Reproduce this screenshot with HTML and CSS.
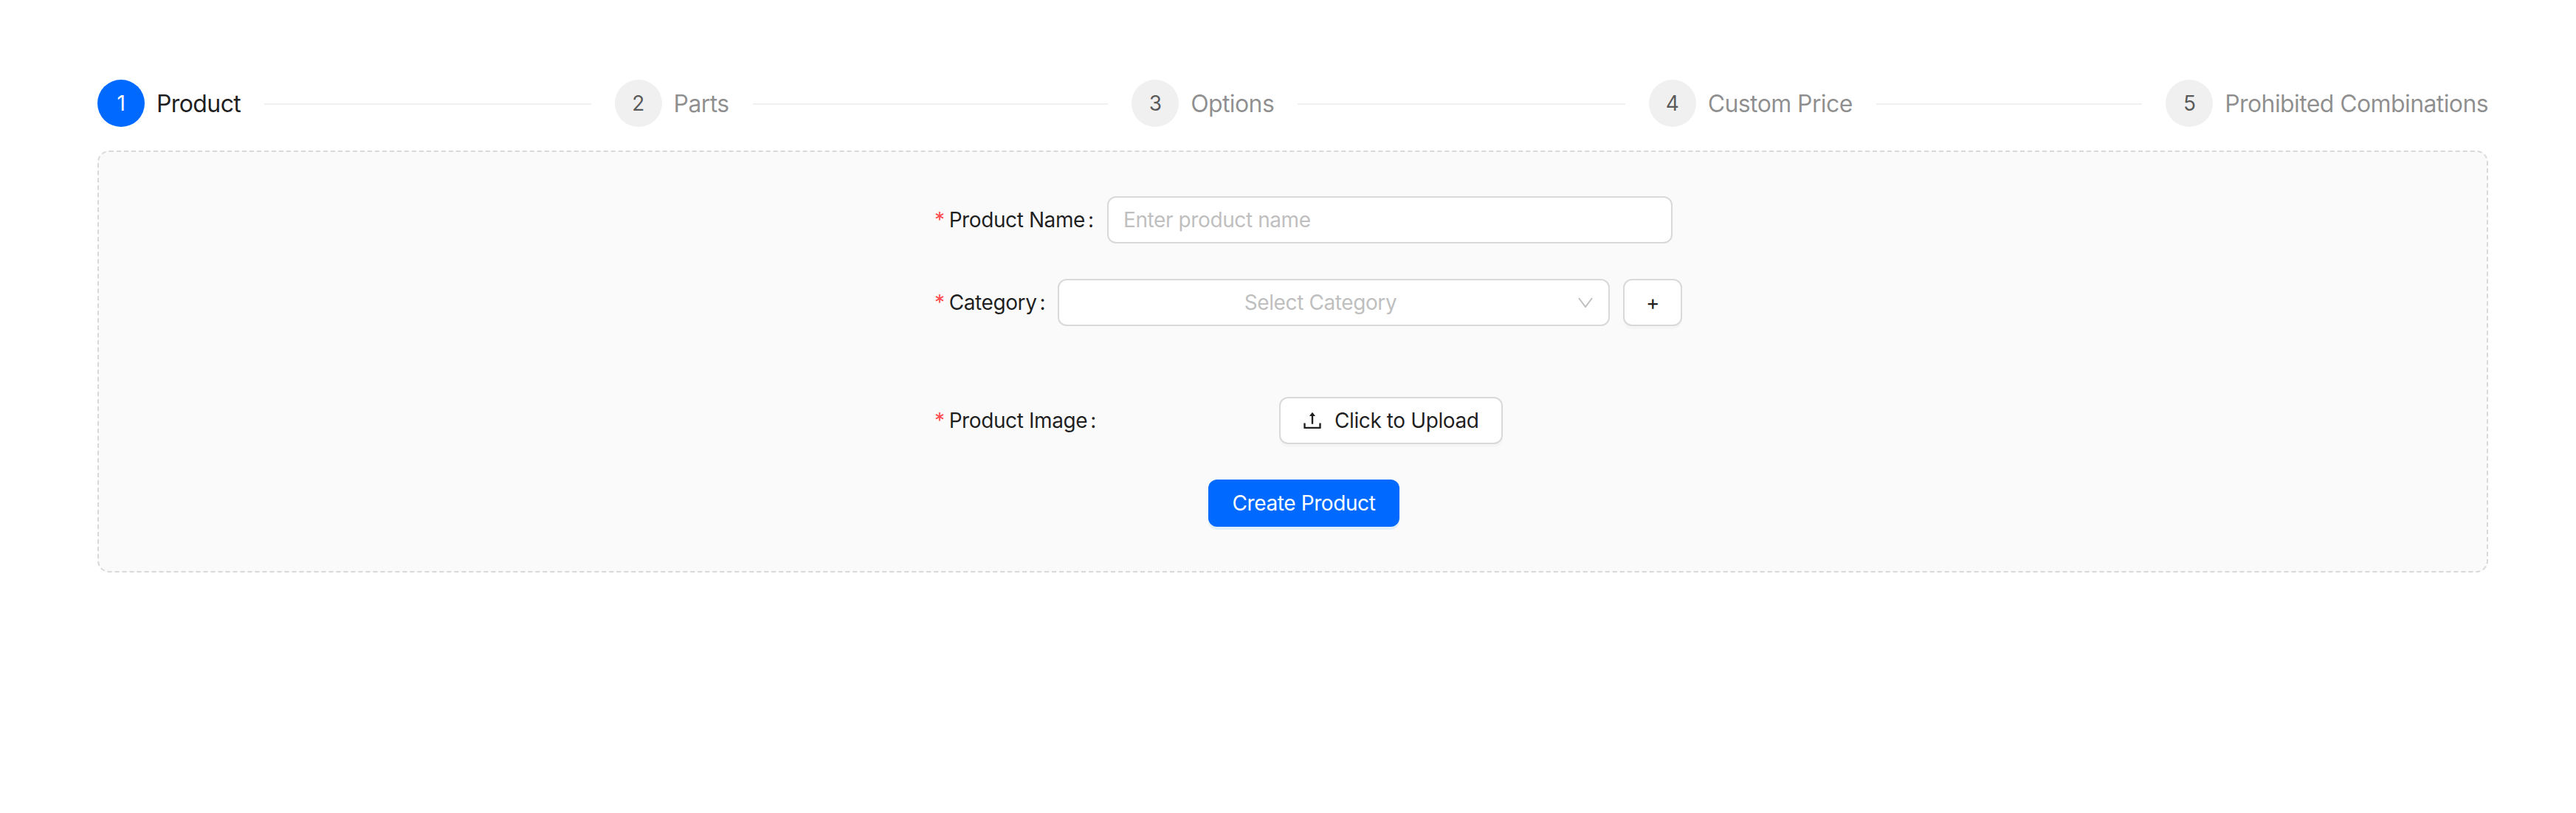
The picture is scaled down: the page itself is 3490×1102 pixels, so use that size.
FILE: index.html
```html
<!DOCTYPE html>
<html lang="en">
<head>
  <meta charset="UTF-8" />
  <title>Create Product</title>
  <link rel="stylesheet" href="styles.css">
</head>
<body>
  <div class="steps">
    <div class="step active"><span class="step-num">1</span><span class="step-title">Product</span><span class="step-line"></span></div>
    <div class="step"><span class="step-num">2</span><span class="step-title">Parts</span><span class="step-line"></span></div>
    <div class="step"><span class="step-num">3</span><span class="step-title">Options</span><span class="step-line"></span></div>
    <div class="step"><span class="step-num">4</span><span class="step-title">Custom Price</span><span class="step-line"></span></div>
    <div class="step last"><span class="step-num">5</span><span class="step-title">Prohibited Combinations</span></div>
  </div>

  <div class="panel">
    <form class="product-form">
      <div class="form-row">
        <label class="form-label label-name" for="productName"><span class="req">*</span>Product Name<span class="colon">:</span></label>
        <input class="text-input" type="text" id="productName" placeholder="Enter product name">
      </div>

      <div class="form-row">
        <label class="form-label label-category"><span class="req">*</span>Category<span class="colon">:</span></label>
        <div class="select-box">
          <span class="select-text">Select Category</span>
          <svg class="select-arrow" viewBox="0 0 20 14" width="20" height="14"><path d="M1 1l9 12 9-12" fill="none" stroke="#bfbfbf" stroke-width="2"/></svg>
        </div>
        <button class="btn btn-add" type="button">+</button>
      </div>

      <div class="form-row upload-row">
        <label class="form-label label-image"><span class="req">*</span>Product Image<span class="colon">:</span></label>
        <button class="btn btn-upload" type="button">
          <svg class="upload-icon" viewBox="64 64 896 896" width="28" height="28" fill="currentColor"><path d="M400 317.7h73.9V656c0 4.4 3.6 8 8 8h60c4.4 0 8-3.6 8-8V317.7H624c6.7 0 10.4-7.7 6.3-12.9L518.3 163a8 8 0 0 0-12.6 0l-112 141.7c-4.1 5.3-.4 13 6.3 13zM878 626h-60c-4.4 0-8 3.6-8 8v154H214V634c0-4.4-3.6-8-8-8h-60c-4.4 0-8 3.6-8 8v198c0 17.7 14.3 32 32 32h684c17.7 0 32-14.3 32-32V634c0-4.4-3.6-8-8-8z"/></svg>
          <span>Click to Upload</span>
        </button>
      </div>

      <button class="btn btn-primary" type="button">Create Product</button>
    </form>
  </div>
</body>
</html>
```

FILE: styles.css
```css
* {
  box-sizing: border-box;
}

body {
  margin: 0;
  padding: 108px 119px 0 132px;
  background: #ffffff;
  font-family: Inter, "Liberation Sans", sans-serif;
  font-size: 28px;
  letter-spacing: -0.4px;
  color: rgba(0, 0, 0, 0.88);
}

.steps {
  display: flex;
}

.step {
  flex: 1 1 0;
  display: flex;
  align-items: center;
  height: 64px;
}

.step.last {
  flex: none;
}

.step-num {
  flex: none;
  width: 64px;
  height: 64px;
  border-radius: 50%;
  display: flex;
  align-items: center;
  justify-content: center;
  background: #f0f0f0;
  color: rgba(0, 0, 0, 0.65);
  font-size: 28px;
  margin-right: 16px;
}

.step-title {
  font-size: 32px;
  letter-spacing: -0.6px;
  color: rgba(0, 0, 0, 0.45);
  white-space: nowrap;
}

.step-line {
  flex: 1;
  height: 2px;
  margin: 2px 32px 0;
  background: #f0f0f0;
}

.step.active .step-num {
  background: #0069ff;
  color: #ffffff;
}

.step.active .step-title {
  color: rgba(0, 0, 0, 0.88);
}

.panel {
  margin-top: 32px;
  height: 572px;
  padding: 60px 0 0 1132px;
  background: #fafafa;
  border: 2px dashed #d9d9d9;
  border-radius: 16px;
}

.product-form {
  width: 1013px;
}

.form-row {
  display: flex;
  align-items: center;
  height: 64px;
  margin-bottom: 48px;
}

.upload-row {
  margin-top: 96px;
}

.form-label {
  flex: none;
  white-space: nowrap;
}

.label-name {
  width: 234px;
}

.label-category {
  width: 167px;
}

.label-image {
  width: 467px;
}

.req {
  color: #ff4d4f;
  margin-right: 6px;
}

.colon {
  margin-left: 4px;
}

.text-input {
  width: 766px;
  height: 64px;
  padding: 0 20px;
  border: 2px solid #d9d9d9;
  border-radius: 12px;
  background: #ffffff;
  font-family: inherit;
  font-size: 28px;
  letter-spacing: inherit;
  color: inherit;
}

.text-input::placeholder {
  color: #bfbfbf;
}

.select-box {
  position: relative;
  width: 748px;
  height: 64px;
  display: flex;
  align-items: center;
  justify-content: center;
  padding: 0 58px 0 22px;
  background: #ffffff;
  border: 2px solid #d9d9d9;
  border-radius: 12px;
  color: #bfbfbf;
}

.select-arrow {
  position: absolute;
  right: 21px;
  top: 23px;
}

.btn {
  height: 64px;
  border-radius: 12px;
  font-family: inherit;
  font-size: 28px;
  letter-spacing: inherit;
  cursor: pointer;
}

.btn-add,
.btn-upload {
  background: #ffffff;
  border: 2px solid #d9d9d9;
  color: rgba(0, 0, 0, 0.88);
  box-shadow: 0 4px 0 rgba(0, 0, 0, 0.02);
}

.btn-add {
  width: 80px;
  margin-left: 18px;
  padding: 0;
}

.btn-upload {
  display: flex;
  align-items: center;
  gap: 16px;
  width: 303px;
  padding: 0 0 0 29px;
  white-space: nowrap;
}

.upload-icon {
  flex: none;
}

.btn-primary {
  display: block;
  width: 259px;
  margin-left: 371px;
  padding: 0;
  border: none;
  background: #0069ff;
  color: #ffffff;
  box-shadow: 0 4px 0 rgba(5, 145, 255, 0.1);
}
```
